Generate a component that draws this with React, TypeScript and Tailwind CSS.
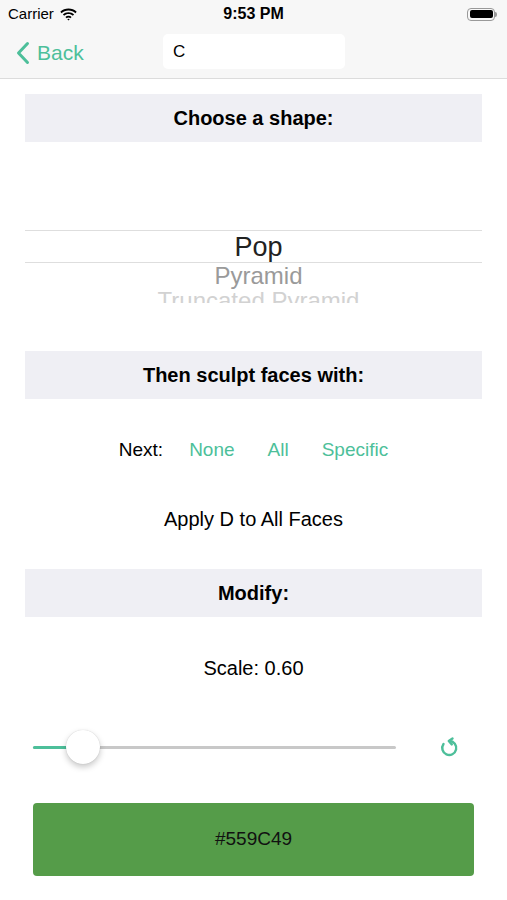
import { useState } from 'react';

const teal = 'text-[#4dbf9a]';

const Header = ({ title }: { title: string }) => (
  <div className="mx-[25px] h-[48px] bg-[#efeff4] flex items-center justify-center">
    <span className="text-[20px] font-bold text-black">{title}</span>
  </div>
);

export default function App() {
  const [mode] = useState('All');

  return (
    <div className="w-[507px] h-[900px] bg-white overflow-hidden font-['Liberation_Sans',Arial,sans-serif] text-black">
      {/* status bar */}
      <div className="h-[28px] bg-[#f7f7f7] flex items-center px-[8px] relative">
        <div className="flex items-center gap-[6px] text-[15px]">
          <span>Carrier</span>
          <svg width="17" height="13" viewBox="0 0 17 13">
            <path d="M8.5 2.5c2.7 0 5.1 1 6.9 2.7l1.3-1.4C14.5 1.8 11.6.6 8.5.6S2.5 1.8.3 3.8l1.3 1.4C3.4 3.5 5.8 2.5 8.5 2.5z" fill="#000" />
            <path d="M8.5 6.1c1.7 0 3.2.6 4.3 1.7l1.3-1.4C12.6 5 10.6 4.2 8.5 4.2S4.4 5 2.9 6.4l1.3 1.4c1.1-1.1 2.6-1.7 4.3-1.7z" fill="#000" />
            <path d="M8.5 9.6c.7 0 1.3.3 1.8.7l1.3-1.4c-.8-.8-1.9-1.2-3.1-1.2s-2.3.4-3.1 1.2l1.3 1.4c.5-.4 1.1-.7 1.8-.7zM8.5 12.6l1.2-1.3c-.3-.3-.7-.5-1.2-.5s-.9.2-1.2.5z" fill="#000" />
          </svg>
        </div>
        <div className="absolute left-0 right-0 text-center text-[16px] font-bold pointer-events-none">9:53 PM</div>
        <div className="ml-auto flex items-center mr-[2px]">
          <div className="w-[28px] h-[13px] rounded-[4px] border border-[#999] p-[1.5px]">
            <div className="w-full h-full bg-black rounded-[2px]" />
          </div>
          <div className="w-[2px] h-[5px] bg-[#999] rounded-r-sm" />
        </div>
      </div>

      {/* nav bar */}
      <div className="h-[51px] bg-[#f7f7f7] border-b border-[#dcdcdc] flex items-center relative">
        <div className={`flex items-center ml-[16px] ${teal}`}>
          <svg width="14" height="24" viewBox="0 0 14 24" fill="none">
            <path d="M11.5 2.5L2.5 12l9 9.5" stroke="#4dbf9a" strokeWidth="3" strokeLinecap="round" strokeLinejoin="round" />
          </svg>
          <span className="text-[21px] ml-[7px]">Back</span>
        </div>
        <div className="absolute left-[163px] top-[6px] w-[182px] h-[35px] bg-white rounded-[5px] flex items-center px-[10px] text-[17px]">
          C
        </div>
      </div>

      <div className="pt-[15px]">
        <Header title="Choose a shape:" />

        {/* picker */}
        <div className="h-[161px] relative mx-[25px] overflow-hidden">
          <div className="absolute left-0 right-0 top-[88px] h-[33px] border-y border-[#dedede]" />
          <div className="absolute left-[10px] right-0 top-[90px] text-center text-[27px] leading-[30px] text-[#222]">Pop</div>
          <div className="absolute left-[10px] right-0 top-[121px] text-center text-[24px] leading-[26px] text-[#9a9a9a]">Pyramid</div>
          <div className="absolute left-[10px] right-0 top-[147px] text-center text-[24px] leading-[24px] text-[#d2d2d2]">
            Truncated Pyramid
          </div>
        </div>

        <div className="mt-[48px]">
          <Header title="Then sculpt faces with:" />
        </div>

        <div className="h-[100px] flex items-center justify-center text-[19px] pt-[2px]">
          <span className="mr-[26px]">Next:</span>
          <span className={`${teal} mr-[33px]`}>None</span>
          <span className={`${mode === 'All' ? teal : ''} mr-[33px]`}>All</span>
          <span className={teal}>Specific</span>
        </div>

        <div className="h-[40px] flex items-center justify-center text-[20px]">Apply D to All Faces</div>

        <div className="mt-[30px]">
          <Header title="Modify:" />
        </div>

        <div className="h-[102px] flex items-center justify-center text-[20px]">Scale: 0.60</div>

        {/* slider */}
        <div className="flex items-center h-[56px] px-[33px]">
          <div className="relative w-[363px] h-[3px] bg-[#c8c8c8] rounded-full">
            <div className="absolute left-0 top-0 h-[3px] w-[40px] bg-[#4dbf9a] rounded-full" />
            <div className="absolute left-[33px] top-[-16px] w-[34px] h-[34px] bg-white rounded-full shadow-[0_3px_6px_rgba(0,0,0,0.22),0_0_1px_rgba(0,0,0,0.2)]" />
          </div>
          <svg className="ml-[41px]" width="24" height="24" viewBox="0 0 24 24" fill="none">
            <path d="M6.5 9A7 7 0 1 0 12.5 6" stroke="#4dbf9a" strokeWidth="2.4" strokeLinecap="round" />
            <path d="M15.5 3.5L11.8 6l3 3.4" stroke="#4dbf9a" strokeWidth="2.4" strokeLinecap="round" strokeLinejoin="round" />
          </svg>
        </div>

        <div className="mx-[33px] mt-[28px] h-[73px] bg-[#559c49] rounded-[4px] flex items-center justify-center text-[19px] text-[#111]">
          #559C49
        </div>
      </div>
    </div>
  );
}
